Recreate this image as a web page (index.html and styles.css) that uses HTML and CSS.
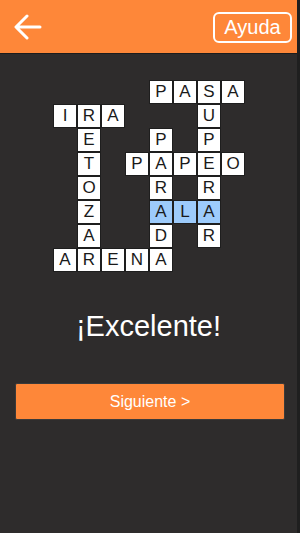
FILE: index.html
```html
<!DOCTYPE html>
<html lang="es">
<head>
    <meta charset="utf-8">
    <title>Crucigrama</title>
    <link rel="stylesheet" href="styles.css">
</head>
<body>
    <div class="app">
        <div class="topbar">
            <a class="back" href="#">
                <svg width="28" height="26" viewBox="0 0 28 26">
                    <path d="M26 13H3M13 2L2 13L13 24" fill="none" stroke="#fff" stroke-width="3" stroke-linecap="round" stroke-linejoin="round"/>
                </svg>
            </a>
            <a class="help" href="#">Ayuda</a>
        </div>

        <div class="board">
            <div class="grid">
                <span></span><span></span><span></span><span></span><span class="cell">P</span><span class="cell">A</span><span class="cell">S</span><span class="cell">A</span>
                <span class="cell">I</span><span class="cell">R</span><span class="cell">A</span><span></span><span></span><span></span><span class="cell">U</span><span></span>
                <span></span><span class="cell">E</span><span></span><span></span><span class="cell">P</span><span></span><span class="cell">P</span><span></span>
                <span></span><span class="cell">T</span><span></span><span class="cell">P</span><span class="cell">A</span><span class="cell">P</span><span class="cell">E</span><span class="cell">O</span>
                <span></span><span class="cell">O</span><span></span><span></span><span class="cell">R</span><span></span><span class="cell">R</span><span></span>
                <span></span><span class="cell">Z</span><span></span><span></span><span class="cell hl">A</span><span class="cell hl">L</span><span class="cell hl">A</span><span></span>
                <span></span><span class="cell">A</span><span></span><span></span><span class="cell">D</span><span></span><span class="cell">R</span><span></span>
                <span class="cell">A</span><span class="cell">R</span><span class="cell">E</span><span class="cell">N</span><span class="cell">A</span><span></span><span></span><span></span>
            </div>
        </div>

        <div class="result">¡Excelente!</div>

        <div class="actions">
            <a class="next" href="#">Siguiente &gt;</a>
        </div>
    </div>
</body>
</html>
```

FILE: styles.css
```css
html, body {
    margin: 0;
    height: 100%;
}
body {
    background: #1f1f1f;
    font-family: "Liberation Sans", Arial, sans-serif;
}
a {
    text-decoration: none;
}
.app {
    width: 297px;
    height: 533px;
    background: #2e2c2c;
}
.topbar {
    height: 53px;
    background: #fe8739;
    border-bottom: 1px solid #1c1c1c;
    display: flex;
    align-items: center;
    justify-content: space-between;
    padding: 0 5px 0 14px;
    box-sizing: content-box;
}
.back {
    display: flex;
    margin-top: 1px;
}
.help {
    width: 79px;
    height: 31px;
    box-sizing: border-box;
    border: 2px solid #fff;
    border-radius: 6px;
    color: #fff;
    font-size: 20px;
    display: flex;
    align-items: center;
    justify-content: center;
    margin-top: 2px;
}
.board {
    display: flex;
    justify-content: center;
    padding: 26px 0 0 1px;
}
.grid {
    display: grid;
    grid-template-columns: repeat(8, 24px);
    grid-auto-rows: 24px;
}
.cell {
    box-sizing: border-box;
    border: 1px solid #1e1e1e;
    background: #fff;
    color: #1a1a1a;
    font-size: 17px;
    display: flex;
    align-items: center;
    justify-content: center;
}
.cell.hl {
    background: #9dcbfb;
}
.result {
    color: #fff;
    font-size: 29px;
    text-align: center;
    margin-top: 38px;
}
.actions {
    padding: 40px 12px 0 15px;
}
.next {
    display: flex;
    align-items: center;
    justify-content: center;
    height: 37px;
    box-sizing: border-box;
    background: #fe8739;
    border: 1px solid #3a3a3a;
    border-radius: 2px;
    color: #fff;
    font-size: 16px;
}
```
